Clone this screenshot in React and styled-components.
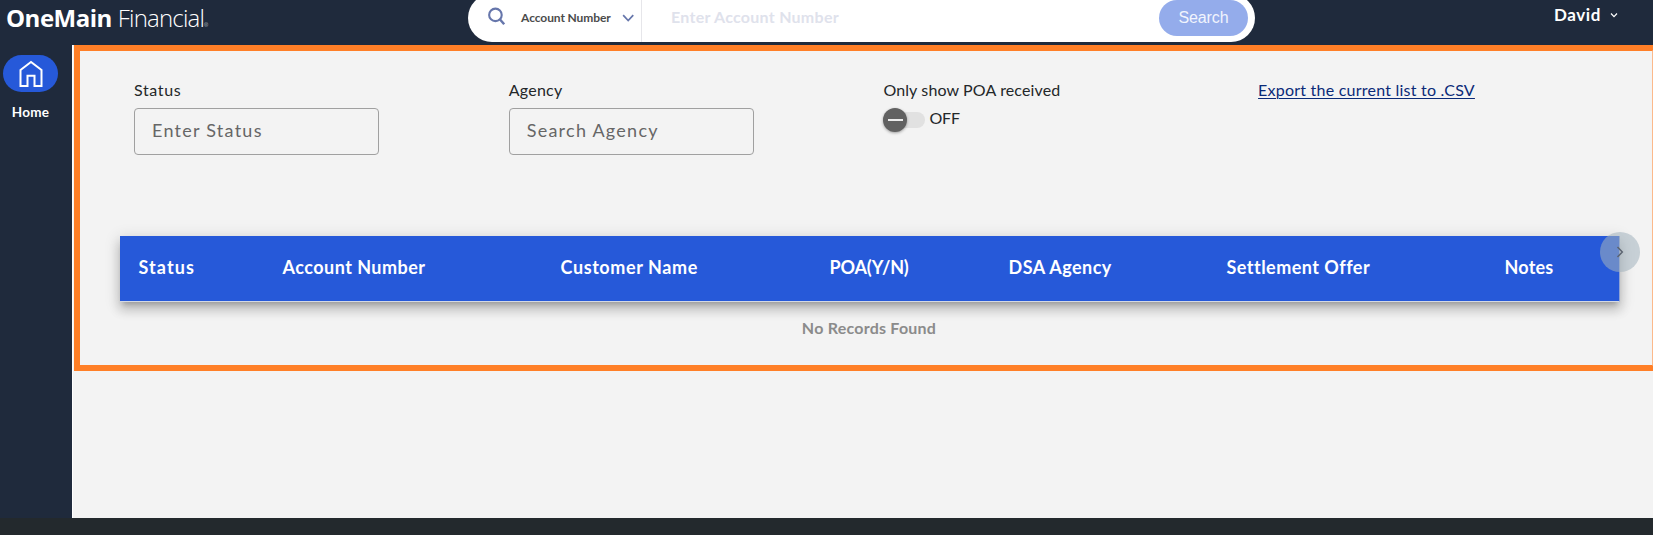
import React from 'react';
import styled, { createGlobalStyle } from 'styled-components';

const GlobalStyle = createGlobalStyle`
  *, *::before, *::after { box-sizing: border-box; }
  body {
    margin: 0;
    overflow: hidden;
    background: #f3f3f3;
    font-family: Lato, "Liberation Sans", sans-serif;
    color: #232729;
  }
  input, button { font: inherit; }
`;

const Page = styled.div`
  display: flex;
  flex-direction: column;
  height: 535px;
  overflow: hidden;
`;

const Header = styled.header`
  display: flex;
  align-items: flex-start;
  height: 45px;
  flex: none;
  background: #1f2a3c;
`;

const Logo = styled.div`
  display: flex;
  align-items: baseline;
  width: 468px;
  padding: 1px 0 0 6px;
  color: #fff;
  font: 300 24px/33px "Open Sans", sans-serif;
  letter-spacing: -0.8px;
  white-space: nowrap;
`;

const LogoStrong = styled.span`
  margin-right: 6px;
  font-weight: 700;
  letter-spacing: -0.5px;
`;

const LogoMark = styled.span`
  font-size: 5px;
  letter-spacing: 0;
`;

const SearchBar = styled.form`
  display: flex;
  align-items: stretch;
  width: 787px;
  height: 48px;
  margin-top: -6px;
  padding-right: 7px;
  border-radius: 24px;
  background: #fff;
`;

const SearchType = styled.div`
  display: flex;
  align-items: center;
  width: 174px;
  padding: 0 7px 1px 20px;
  border-right: 1px solid #e6e6ea;
`;

const SearchIcon = styled.svg`
  margin-bottom: 3px;
`;

const SearchTypeLabel = styled.span`
  margin: 0 11px 0 15px;
  color: #4b4b4b;
  font-size: 12px;
  font-weight: 700;
  letter-spacing: -0.1px;
  line-height: 16px;
  white-space: nowrap;
`;

const SearchInput = styled.input`
  flex: 1;
  min-width: 0;
  padding: 0 0 4px 29px;
  border: 0;
  background: none;
  font-size: 16px;
  font-weight: 700;
  letter-spacing: 0.27px;
  outline: none;
  &::placeholder { color: #dfe2ec; opacity: 1; }
`;

const SearchButton = styled.button`
  align-self: flex-start;
  width: 89px;
  height: 36px;
  margin-top: 6px;
  padding: 0;
  border: 0;
  border-radius: 18px;
  background: #94aceb;
  color: #f1f4fd;
  font: 16px "Liberation Sans", Arial, sans-serif;
  letter-spacing: -0.15px;
`;

const UserMenu = styled.div`
  display: flex;
  align-items: center;
  gap: 9px;
  margin-left: auto;
  padding: 4px 35px 0 0;
  color: #fff;
  font-size: 17px;
  font-weight: 700;
  letter-spacing: 0.6px;
  line-height: 21px;
`;

const Body = styled.div`
  display: flex;
  flex: 1;
  min-height: 0;
`;

const Sidebar = styled.nav`
  display: flex;
  width: 72px;
  flex: none;
  padding: 10px 0 0 3px;
  background: #1f2a3c;
`;

const NavItem = styled.a`
  display: flex;
  flex-direction: column;
  align-items: center;
  width: 55px;
  color: #fff;
  font-size: 13.5px;
  font-weight: 700;
  line-height: 18px;
  letter-spacing: 0.2px;
`;

const NavIcon = styled.span`
  display: flex;
  align-items: center;
  justify-content: center;
  width: 55px;
  height: 37px;
  flex: none;
  margin-bottom: 11px;
  border-radius: 18.5px;
  background: #2659d9;
`;

const Main = styled.main`
  flex: 1;
  min-width: 0;
  padding-left: 1px;
  background: linear-gradient(90deg, #fff 1px, #f3f3f3 1px);
`;

const Panel = styled.section`
  width: 1584px;
  height: 326px;
  border: 6px solid #ff7f27;
  border-right: 6px solid #fcb98b;
  margin-left: 1px;
  padding: 28px 0 0 40px;
`;

const Filters = styled.div`
  display: grid;
  grid-template-columns: repeat(4, 374.7px);
  height: 157px;
  padding-left: 14px;
`;

const Filter = styled.div`
  display: flex;
  flex-direction: column;
  align-items: flex-start;
`;

const Label = styled.label`
  height: 29px;
  padding-top: 1px;
  font-size: 16px;
  line-height: 20px;
  letter-spacing: ${p => p.$spacing}px;
`;

const TextInput = styled.input`
  width: 245px;
  height: 47px;
  padding: 0 17px 4px;
  border: 1px solid #a0a0a0;
  border-radius: 4px;
  background: transparent;
  color: #666;
  font-size: 18px;
  letter-spacing: 1.25px;
  outline: none;
  &::placeholder { color: #666; opacity: 1; }
`;

const ExportLink = styled.a`
  padding-top: 1px;
  color: #0a2a78;
  font-size: 16px;
  line-height: 20px;
  letter-spacing: 0.23px;
  text-decoration: underline;
  text-decoration-thickness: 1px;
  text-underline-offset: 2px;
`;

const ToggleRow = styled.div`
  display: flex;
  align-items: center;
  gap: 4px;
  height: 24px;
  line-height: 20px;
`;

const ToggleTrack = styled.span`
  display: flex;
  align-items: center;
  width: 42px;
  height: 16px;
  border-radius: 8px;
  background: #e1e1e1;
`;

const ToggleKnob = styled.span`
  display: flex;
  align-items: center;
  justify-content: center;
  width: 24px;
  height: 24px;
  border-radius: 50%;
  background: #616161;
  box-shadow: 0 1px 3px rgba(0, 0, 0, 0.35);
  &::after { content: ""; width: 15px; height: 2px; background: #ececec; }
`;

const ToggleState = styled.span`
  margin-bottom: 4px;
  letter-spacing: -0.1px;
`;

const TableHead = styled.div`
  position: relative;
  display: grid;
  grid-template-columns: 144px 278px 269px 179px 218px 278px 133px;
  width: 1500px;
  height: 66px;
  border-right: 1px solid #8fa3d4;
  border-bottom: 1px solid #d4d9e4;
  background: #2659d9;
  background-clip: padding-box;
  box-shadow: 0 5px 5px -3px rgba(0, 0, 0, 0.2), 0 8px 10px 1px rgba(0, 0, 0, 0.14), 0 3px 14px 2px rgba(0, 0, 0, 0.12);
`;

const HeadCell = styled.div`
  padding: 20px 0 0 18.5px;
  color: #fff;
  font-size: 18px;
  font-weight: 700;
  line-height: 22px;
  letter-spacing: ${p => p.$spacing}px;
  white-space: nowrap;
`;

const ScrollButton = styled.button`
  position: absolute;
  top: -4px;
  right: -21px;
  display: flex;
  align-items: center;
  justify-content: center;
  width: 40px;
  height: 40px;
  padding: 0;
  border: 0;
  border-radius: 50%;
  background: rgba(162, 178, 190, 0.55);
`;

const Empty = styled.p`
  width: 1498px;
  margin: 15px 0 0;
  color: #8b8b8b;
  font-size: 16px;
  font-weight: 700;
  line-height: 22px;
  letter-spacing: 0.23px;
  text-align: center;
`;

const Footer = styled.footer`
  height: 17px;
  flex: none;
  background: #23292d;
`;

const columns = [
  ['Status', 1.1],
  ['Account Number', 0.47],
  ['Customer Name', 0.6],
  ['POA(Y/N)', -0.15],
  ['DSA Agency', 0.45],
  ['Settlement Offer', 0.47],
  ['Notes', 0.2],
];

export default function App() {
  return (
    <Page>
      <GlobalStyle />
      <Header>
        <Logo>
          <LogoStrong>OneMain</LogoStrong>Financial<LogoMark>®</LogoMark>
        </Logo>
        <SearchBar>
          <SearchType>
            <SearchIcon width="19" height="19" viewBox="0 0 19 19" fill="none" stroke="#6676ab" strokeWidth="2.2">
              <circle cx="7.8" cy="7.8" r="6.6" />
              <path d="M12.6 12.6L17 17.6" strokeWidth="2.6" />
            </SearchIcon>
            <SearchTypeLabel>Account Number</SearchTypeLabel>
            <svg width="13" height="9" viewBox="0 0 13 9" fill="none" stroke="#6676ab" strokeWidth="1.8">
              <path d="M1.2 2L6.5 7.7L11.8 2" />
            </svg>
          </SearchType>
          <SearchInput placeholder="Enter Account Number" />
          <SearchButton type="button">Search</SearchButton>
        </SearchBar>
        <UserMenu>
          David
          <svg width="8" height="6" viewBox="0 0 8 6" fill="none" stroke="#fff" strokeWidth="1.2">
            <path d="M1 1.5L4 4.7L7 1.5" />
          </svg>
        </UserMenu>
      </Header>
      <Body>
        <Sidebar>
          <NavItem>
            <NavIcon>
              <svg width="24" height="28" viewBox="0 0 24 28" fill="none" stroke="#fff" strokeWidth="2">
                <path d="M1.5 10L12 2L22.5 10V26H15.5V15.8H8.5V26H1.5Z" />
              </svg>
            </NavIcon>
            Home
          </NavItem>
        </Sidebar>
        <Main>
          <Panel>
            <Filters>
              <Filter>
                <Label $spacing={0.65}>Status</Label>
                <TextInput placeholder="Enter Status" />
              </Filter>
              <Filter>
                <Label $spacing={0.25}>Agency</Label>
                <TextInput placeholder="Search Agency" />
              </Filter>
              <Filter>
                <Label $spacing={0.13}>Only show POA received</Label>
                <ToggleRow>
                  <ToggleTrack><ToggleKnob /></ToggleTrack>
                  <ToggleState>OFF</ToggleState>
                </ToggleRow>
              </Filter>
              <Filter>
                <ExportLink>Export the current list to .CSV</ExportLink>
              </Filter>
            </Filters>
            <TableHead>
              {columns.map(([name, spacing]) => (
                <HeadCell key={name} $spacing={spacing}>{name}</HeadCell>
              ))}
              <ScrollButton type="button" aria-label="Scroll right">
                <svg width="8" height="12" viewBox="0 0 8 12" fill="none" stroke="#5c6470" strokeWidth="1.5">
                  <path d="M1.5 1L6.3 6L1.5 11" />
                </svg>
              </ScrollButton>
            </TableHead>
            <Empty>No Records Found</Empty>
          </Panel>
        </Main>
      </Body>
      <Footer />
    </Page>
  );
}
